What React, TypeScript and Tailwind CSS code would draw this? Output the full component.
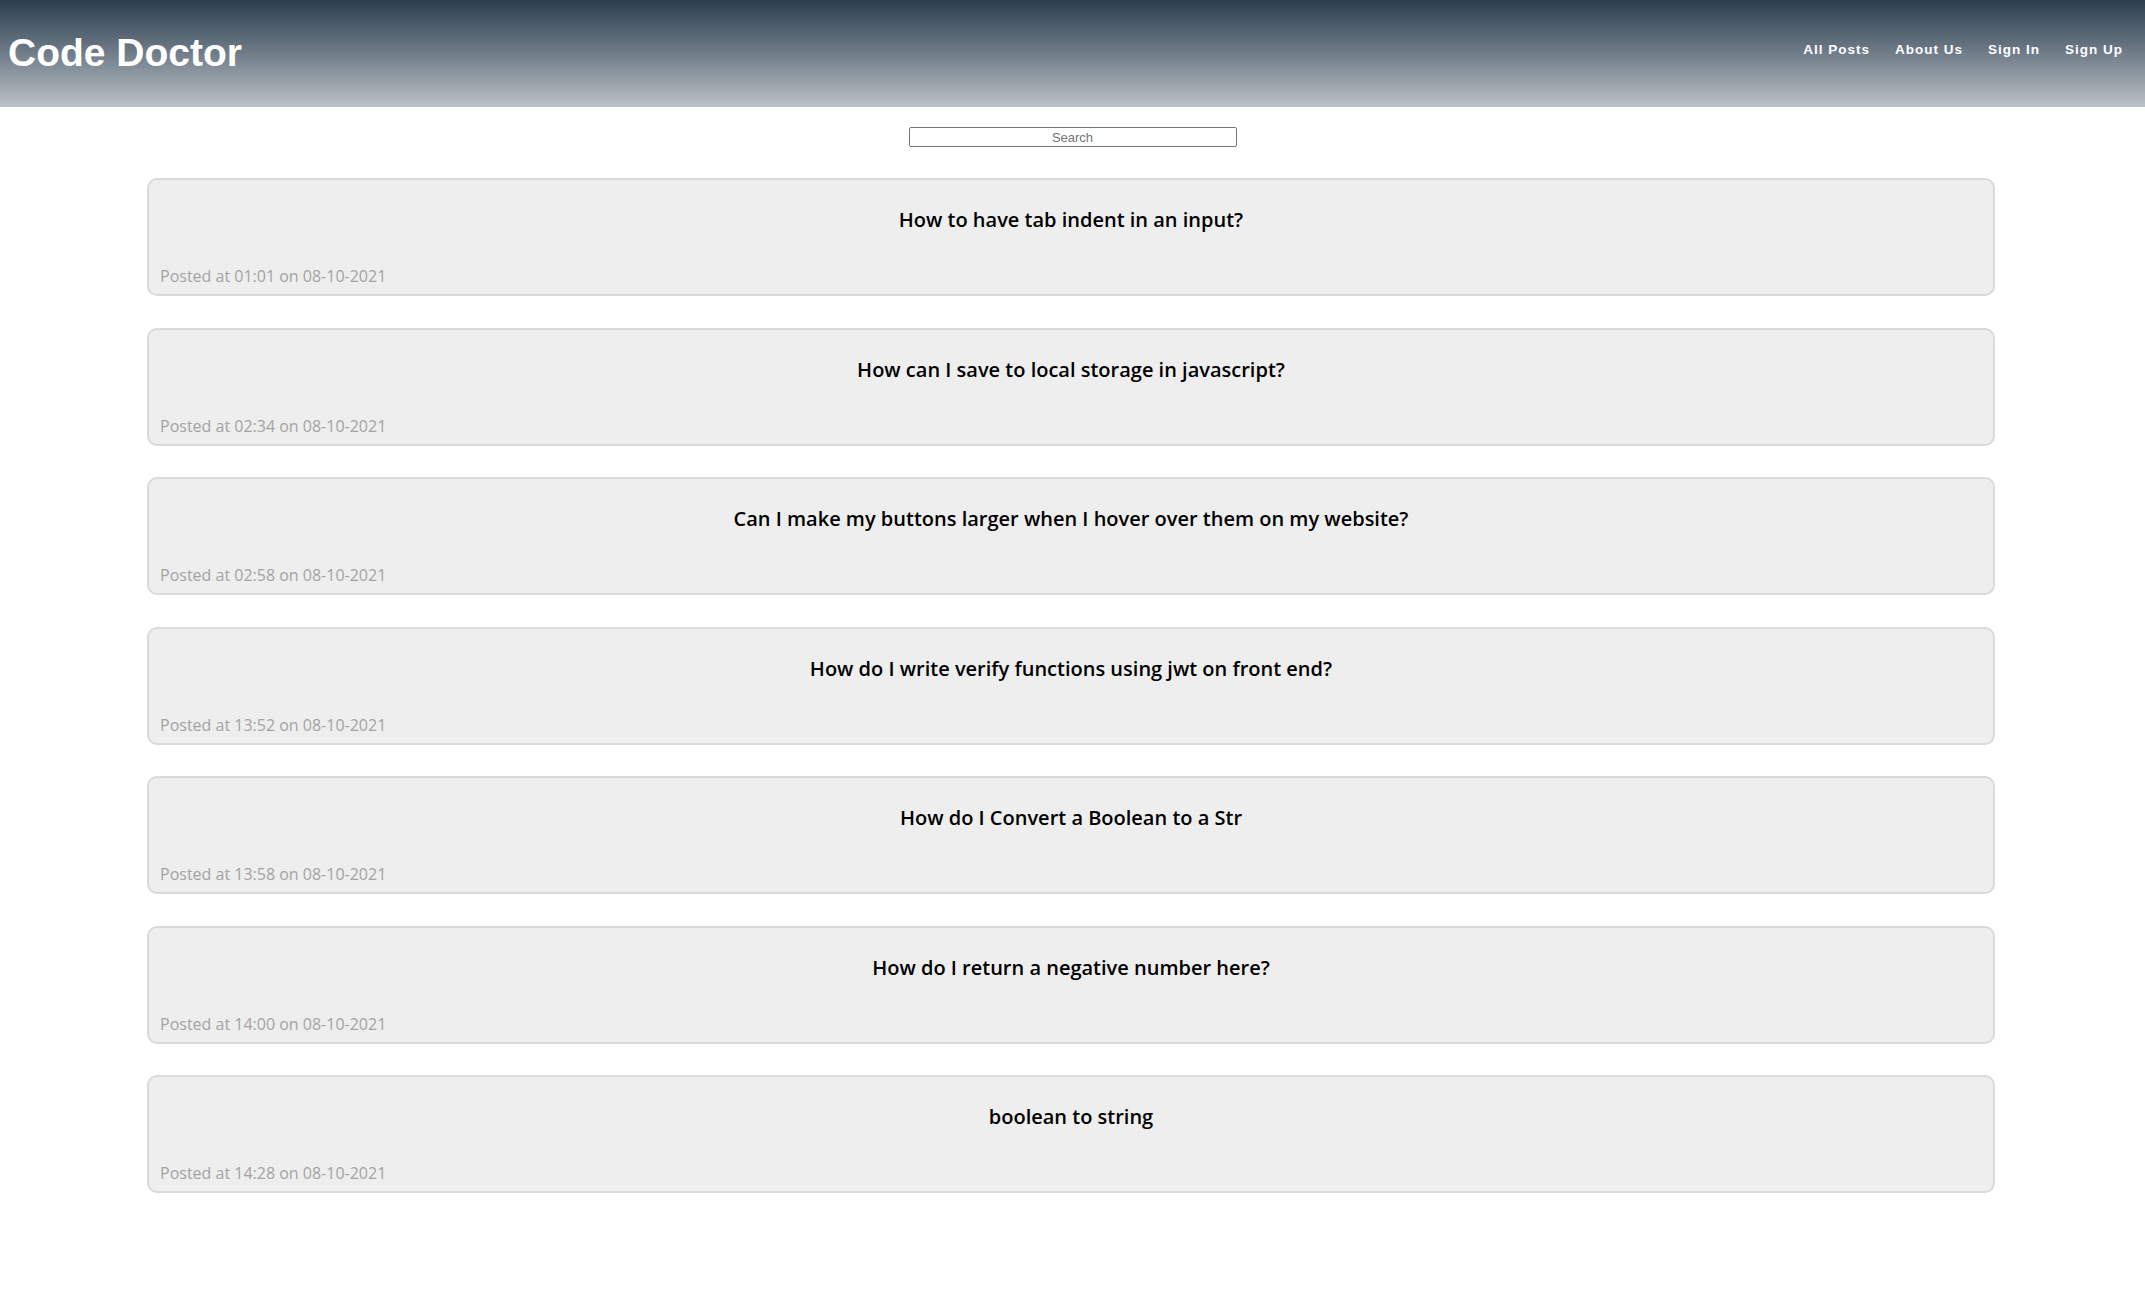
import { useState } from 'react';

interface Post {
  id: number;
  title: string;
  time: string;
  date: string;
}

const posts: Post[] = [
  { id: 1, title: 'How to have tab indent in an input?', time: '01:01', date: '08-10-2021' },
  { id: 2, title: 'How can I save to local storage in javascript?', time: '02:34', date: '08-10-2021' },
  { id: 3, title: 'Can I make my buttons larger when I hover over them on my website?', time: '02:58', date: '08-10-2021' },
  { id: 4, title: 'How do I write verify functions using jwt on front end?', time: '13:52', date: '08-10-2021' },
  { id: 5, title: 'How do I Convert a Boolean to a Str', time: '13:58', date: '08-10-2021' },
  { id: 6, title: 'How do I return a negative number here?', time: '14:00', date: '08-10-2021' },
  { id: 7, title: 'boolean to string', time: '14:28', date: '08-10-2021' },
];

const navLinks = ['All Posts', 'About Us', 'Sign In', 'Sign Up'];

const App = () => {
  const [search, setSearch] = useState('');

  return (
    <div className="min-h-screen bg-white">
      <header className="h-[107px] flex items-center justify-between bg-gradient-to-b from-[#2c3e50] to-[#bdc3c7] pl-[8px] pr-[22px]">
        <h1 className="text-[39px] font-bold text-white font-['Liberation_Sans',Arial,sans-serif] leading-none pb-[2px]">
          Code Doctor
        </h1>
        <nav className="flex gap-[25px] pb-[6px]">
          {navLinks.map((link) => (
            <a
              key={link}
              href="#"
              className="text-white text-[13.5px] font-bold tracking-[1px] font-['Liberation_Sans',Arial,sans-serif]"
            >
              {link}
            </a>
          ))}
        </nav>
      </header>

      <div className="flex justify-center pt-[20px]">
        <input
          value={search}
          onChange={(e) => setSearch(e.target.value)}
          placeholder="Search"
          className="w-[328px] h-[20px] border border-[#767676] rounded-[2px] text-center text-[13px] text-[#333] placeholder:text-[#757575] font-['Liberation_Sans',Arial,sans-serif] outline-none"
        />
      </div>

      <div className="flex flex-col gap-[31.5px] w-[1848px] ml-[147px] mt-[31px] pb-[40px]">
        {posts.map((post) => (
          <div
            key={post.id}
            className="h-[118px] bg-[#eeeeee] border-2 border-[#dadada] rounded-[10px] px-[11px] pt-[26px] font-['Open_Sans',sans-serif]"
          >
            <h3 className="text-center text-[20px] leading-[28px] font-semibold text-black">
              {post.title}
            </h3>
            <p className="mt-[30px] text-[16px] leading-[24px] text-[#a3a3a3]">
              Posted at {post.time} on {post.date}
            </p>
          </div>
        ))}
      </div>
    </div>
  );
};

export default App;
